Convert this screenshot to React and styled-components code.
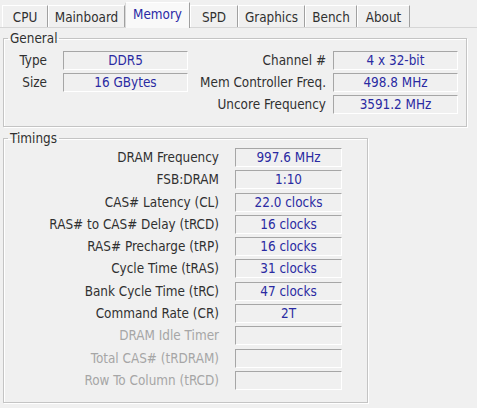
import React from "react";
import styled, { createGlobalStyle, css } from "styled-components";

const Global = createGlobalStyle`
  html, body { margin: 0; padding: 0; background: #f0f0f0; }
  body { font-family: "DejaVu Sans Condensed", "DejaVu Sans", sans-serif; font-size: 13.4px; }
`;

const Window = styled.div`
  width: 477px;
  height: 408px;
  background: #f0f0f0;
  color: #303030;
  font-family: "DejaVu Sans Condensed", "DejaVu Sans", sans-serif;
  font-size: 13.4px;
  overflow: hidden;
  box-sizing: border-box;
`;

const TabBar = styled.div`
  display: flex;
  align-items: flex-end;
  height: 28px;
  padding-left: 2px;
  box-sizing: border-box;
  border-bottom: 1px solid #d6d6d6;
`;

const Tab = styled.div`
  width: ${(p) => p.$w}px;
  height: 22px;
  padding-top: 1px;
  box-sizing: border-box;
  display: flex;
  align-items: center;
  justify-content: center;
  border-left: 1px solid #ffffff;
  border-top: 1px solid #ffffff;
  border-right: 1px solid #a0a0a0;
  color: #303030;
  background: #f0f0f0;
  ${(p) =>
    p.$active &&
    css`
      height: 26px;
      margin-bottom: -1px;
      padding-top: 0;
      padding-bottom: 2px;
      background: #f9f9f9;
      color: #2a2aa6;
      border-left: 1px solid #d8d8d8;
    `}
`;

const Group = styled.fieldset`
  margin: ${(p) => p.$mt}px 0 0 3px;
  width: ${(p) => p.$w}px;
  box-sizing: border-box;
  border: 1px solid #c4c4c4;
  box-shadow: 1px 1px 0 #ffffff, inset 1px 1px 0 #ffffff;
  padding: ${(p) => p.$pad};
  min-width: 0;
`;

const Legend = styled.legend`
  padding: 1px 2px 0;
  margin-left: 4px;
  line-height: 16px;
  color: #303030;
`;

const GeneralGrid = styled.div`
  display: grid;
  grid-template-columns: 59px 125px 1fr 125px;
  grid-auto-rows: 19px;
  row-gap: 3px;
`;

const TimingGrid = styled.div`
  display: grid;
  grid-template-columns: 231px 107px;
  grid-auto-rows: 19px;
  row-gap: 3.3px;
`;

const Label = styled.div`
  text-align: right;
  line-height: 20px;
  white-space: nowrap;
  padding-right: ${(p) => p.$pr}px;
  color: ${(p) => (p.$disabled ? "#a6a6a6" : "#303030")};
  grid-column: ${(p) => p.$col || "auto"};
`;

const Field = styled.div`
  box-sizing: border-box;
  height: 19px;
  line-height: 18px;
  border: 1px solid;
  border-color: #a6a6a6 #ffffff #ffffff #a6a6a6;
  text-align: center;
  color: #2a2aa2;
  white-space: nowrap;
  grid-column: ${(p) => p.$col || "auto"};
`;

const tabs = [
  ["CPU", 46],
  ["Mainboard", 77],
  ["Memory", 65],
  ["SPD", 48],
  ["Graphics", 67],
  ["Bench", 52],
  ["About", 53],
];

const timings = [
  ["DRAM Frequency", "997.6 MHz"],
  ["FSB:DRAM", "1:10"],
  ["CAS# Latency (CL)", "22.0 clocks"],
  ["RAS# to CAS# Delay (tRCD)", "16 clocks"],
  ["RAS# Precharge (tRP)", "16 clocks"],
  ["Cycle Time (tRAS)", "31 clocks"],
  ["Bank Cycle Time (tRC)", "47 clocks"],
  ["Command Rate (CR)", "2T"],
  ["DRAM Idle Timer", "", true],
  ["Total CAS# (tRDRAM)", "", true],
  ["Row To Column (tRCD)", "", true],
];

export default function App() {
  return (
    <Window>
      <Global />
      <TabBar>
        {tabs.map(([t, w]) => (
          <Tab key={t} $w={w} $active={t === "Memory"}>
            {t}
          </Tab>
        ))}
      </TabBar>

      <Group $mt={2} $w={464} $pad="4px 8px 12px 0">
        <Legend>General</Legend>
        <GeneralGrid>
          <Label $pr={16}>Type</Label>
          <Field>DDR5</Field>
          <Label $pr={7}>Channel #</Label>
          <Field>4 x 32-bit</Field>

          <Label $pr={16}>Size</Label>
          <Field>16 GBytes</Field>
          <Label $pr={7}>Mem Controller Freq.</Label>
          <Field>498.8 MHz</Field>

          <Label $pr={7} $col="3">Uncore Frequency</Label>
          <Field>3591.2 MHz</Field>
        </GeneralGrid>
      </Group>

      <Group $mt={3} $w={365} $pad="1px 25px 12px 0">
        <Legend>Timings</Legend>
        <TimingGrid>
          {timings.map(([l, v, d]) => (
            <React.Fragment key={l}>
              <Label $pr={16} $disabled={d}>
                {l}
              </Label>
              <Field>{v}</Field>
            </React.Fragment>
          ))}
        </TimingGrid>
      </Group>
    </Window>
  );
}
